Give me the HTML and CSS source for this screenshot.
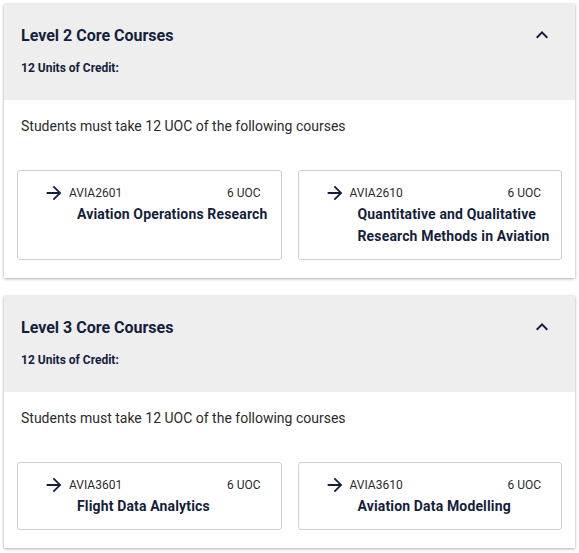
FILE: index.html
```html
<!DOCTYPE html>
<html lang="en">
<head>
  <meta charset="UTF-8" />
  <meta name="viewport" content="width=device-width, initial-scale=1.0" />
  <title>Core Courses</title>
  <link rel="stylesheet" href="styles.css">
</head>
<body>
  <section class="panel">
    <div class="panel-head">
      <div>
        <h2>Level 2 Core Courses</h2>
        <p class="uoc">12 Units of Credit:</p>
      </div>
      <svg class="chevron" viewBox="0 0 24 24" width="24" height="24"><path d="M7.41 15.41 12 10.83l4.59 4.58L18 14l-6-6-6 6z"/></svg>
    </div>
    <div class="panel-body">
      <p class="intro">Students must take 12 UOC of the following courses</p>
      <div class="courses">
        <a class="course">
          <div class="course-top">
            <svg class="arrow" viewBox="0 0 24 24" width="22" height="22"><path d="M12 4l-1.41 1.41L16.17 11H4v2h12.17l-5.58 5.59L12 20l8-8z"/></svg>
            <span class="code">AVIA2601</span>
            <span class="credits">6 UOC</span>
          </div>
          <div class="course-name">Aviation Operations Research</div>
        </a>
        <a class="course">
          <div class="course-top">
            <svg class="arrow" viewBox="0 0 24 24" width="22" height="22"><path d="M12 4l-1.41 1.41L16.17 11H4v2h12.17l-5.58 5.59L12 20l8-8z"/></svg>
            <span class="code">AVIA2610</span>
            <span class="credits">6 UOC</span>
          </div>
          <div class="course-name">Quantitative and Qualitative Research Methods in Aviation</div>
        </a>
      </div>
    </div>
  </section>

  <section class="panel">
    <div class="panel-head">
      <div>
        <h2>Level 3 Core Courses</h2>
        <p class="uoc">12 Units of Credit:</p>
      </div>
      <svg class="chevron" viewBox="0 0 24 24" width="24" height="24"><path d="M7.41 15.41 12 10.83l4.59 4.58L18 14l-6-6-6 6z"/></svg>
    </div>
    <div class="panel-body">
      <p class="intro">Students must take 12 UOC of the following courses</p>
      <div class="courses">
        <a class="course">
          <div class="course-top">
            <svg class="arrow" viewBox="0 0 24 24" width="22" height="22"><path d="M12 4l-1.41 1.41L16.17 11H4v2h12.17l-5.58 5.59L12 20l8-8z"/></svg>
            <span class="code">AVIA3601</span>
            <span class="credits">6 UOC</span>
          </div>
          <div class="course-name">Flight Data Analytics</div>
        </a>
        <a class="course">
          <div class="course-top">
            <svg class="arrow" viewBox="0 0 24 24" width="22" height="22"><path d="M12 4l-1.41 1.41L16.17 11H4v2h12.17l-5.58 5.59L12 20l8-8z"/></svg>
            <span class="code">AVIA3610</span>
            <span class="credits">6 UOC</span>
          </div>
          <div class="course-name">Aviation Data Modelling</div>
        </a>
      </div>
    </div>
  </section>
</body>
</html>
```

FILE: styles.css
```css
body {
  font-family: Roboto, 'Liberation Sans', sans-serif;
  background: #fff;
  color: #1d2432;
  margin: 0;
  padding: 4px 4px;
  display: flex;
  flex-direction: column;
  gap: 18px;
}
.panel {
  background: #fff;
  box-shadow: 0 1px 3px rgba(0, 0, 0, 0.3), 0 0 1px rgba(0, 0, 0, 0.15);
}
.panel-head {
  background: #eeeeee;
  height: 96px;
  box-sizing: border-box;
  padding: 19px 21px 0 17px;
  display: flex;
  justify-content: space-between;
  align-items: flex-start;
}
h2 {
  margin: 3px 0 0;
  font-size: 16px;
  line-height: 20px;
  font-weight: 700;
  color: #141e3c;
}
.uoc {
  margin: 14px 0 0;
  font-size: 12px;
  line-height: 16px;
  font-weight: 700;
  color: #141e3c;
}
.chevron {
  fill: #141e3c;
}
.panel-body {
  padding: 17px 13px 18px;
}
.intro {
  margin: 0 0 35px 4px;
  font-size: 14px;
  line-height: 18px;
  color: #2b2b2b;
}
.courses {
  display: grid;
  grid-template-columns: 1fr 1fr;
  gap: 16px;
}
.course {
  border: 1px solid #cfcfcf;
  border-radius: 3px;
  padding: 14px 6px 12px 25px;
  color: #141e3c;
  cursor: pointer;
}
.course-top {
  display: flex;
  align-items: center;
  height: 16px;
  margin-right: 14px;
}
.arrow {
  fill: #141e3c;
  margin-right: 4px;
}
.code, .credits {
  font-size: 12px;
  color: #2b2b2b;
}
.credits {
  margin-left: auto;
}
.course-name {
  margin-top: 2px;
  padding-left: 34px;
  font-size: 14px;
  line-height: 22px;
  font-weight: 700;
  letter-spacing: 0.15px;
}
```
